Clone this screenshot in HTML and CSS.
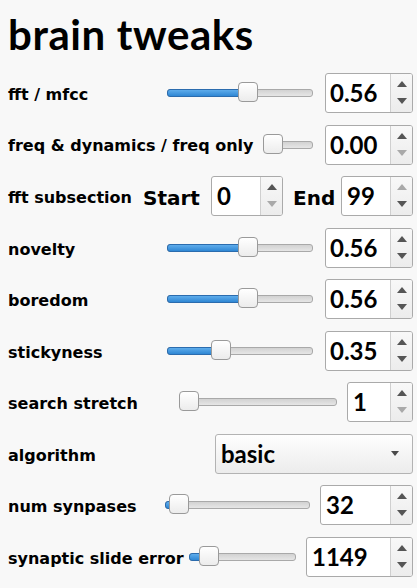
FILE: index.html
```html
<!DOCTYPE html>
<html>
<head>
<meta charset="utf-8">
<link rel="stylesheet" href="styles.css">
</head>
<body>
<main class="panel">
  <h1 class="title">brain tweaks</h1>

  <div class="row">
    <span class="label w159">fft / mfcc</span>
    <div class="slider"><div class="track"><div class="fill" style="width:81px"></div></div><div class="handle" style="left:71px"></div></div>
    <div class="spin sp88 ml12"><span class="val">0.56</span><span class="btns"><i class="up"></i><i class="down"></i></span></div>
  </div>

  <div class="row">
    <span class="label w255">freq &amp; dynamics / freq only</span>
    <div class="slider"><div class="track"></div><div class="handle" style="left:0px"></div></div>
    <div class="spin sp88 ml12"><span class="val">0.00</span><span class="btns"><i class="up"></i><i class="down off"></i></span></div>
  </div>

  <div class="row">
    <span class="label w135">fft subsection</span>
    <span class="word w68">Start</span>
    <div class="spin sp72"><span class="val pl5">0</span><span class="btns"><i class="up"></i><i class="down off"></i></span></div>
    <span class="word w48 ml10">End</span>
    <div class="spin sp72"><span class="val pl5">99</span><span class="btns"><i class="up off"></i><i class="down"></i></span></div>
  </div>

  <div class="row">
    <span class="label w159">novelty</span>
    <div class="slider"><div class="track"><div class="fill" style="width:81px"></div></div><div class="handle" style="left:71px"></div></div>
    <div class="spin sp88 ml12"><span class="val">0.56</span><span class="btns"><i class="up"></i><i class="down"></i></span></div>
  </div>

  <div class="row">
    <span class="label w159">boredom</span>
    <div class="slider"><div class="track"><div class="fill" style="width:81px"></div></div><div class="handle" style="left:71px"></div></div>
    <div class="spin sp88 ml12"><span class="val">0.56</span><span class="btns"><i class="up"></i><i class="down"></i></span></div>
  </div>

  <div class="row">
    <span class="label w159">stickyness</span>
    <div class="slider"><div class="track"><div class="fill" style="width:54px"></div></div><div class="handle" style="left:44px"></div></div>
    <div class="spin sp88 ml12"><span class="val">0.35</span><span class="btns"><i class="up"></i><i class="down"></i></span></div>
  </div>

  <div class="row">
    <span class="label w171">search stretch</span>
    <div class="slider"><div class="track"></div><div class="handle" style="left:0px"></div></div>
    <div class="spin sp66 ml10"><span class="val pl5">1</span><span class="btns"><i class="up"></i><i class="down off"></i></span></div>
  </div>

  <div class="row">
    <span class="label w207">algorithm</span>
    <div class="combo"><span class="combo-text">basic</span><i class="combo-arrow"></i></div>
  </div>

  <div class="row">
    <span class="label w157">num synpases</span>
    <div class="slider"><div class="track"><div class="fill" style="width:14px"></div></div><div class="handle" style="left:4px"></div></div>
    <div class="spin sp93 ml10"><span class="val pl5">32</span><span class="btns"><i class="up"></i><i class="down"></i></span></div>
  </div>

  <div class="row">
    <span class="label w181">synaptic slide error</span>
    <div class="slider"><div class="track"><div class="fill" style="width:20px"></div></div><div class="handle" style="left:10px"></div></div>
    <div class="spin sp107 ml10"><span class="val pl5">1149</span><span class="btns"><i class="up"></i><i class="down"></i></span></div>
  </div>
</main>
</body>
</html>
```

FILE: styles.css
```css
body {
  margin: 0;
  background: #f8f8f8;
  color: #000;
}

.panel {
  display: flex;
  flex-direction: column;
  gap: 11.56px;
  width: 405px;
  padding: 0 4px 0 8px;
}

.title {
  margin: 0;
  height: 61.44px;
  box-sizing: border-box;
  padding-top: 8.5px;
  font: 700 42px/1.2 Lato, sans-serif;
  letter-spacing: 0.6px;
}

.row {
  display: flex;
  align-items: center;
  height: 40px;
}

.label {
  flex: none;
  font: 700 16px/1.2 "DejaVu Sans", sans-serif;
  white-space: nowrap;
  padding-top: 3px;
}

.word {
  flex: none;
  font: 700 20px/1.2 "DejaVu Sans", sans-serif;
  white-space: nowrap;
  padding-top: 3px;
}

.w135 { width: 135px; }
.w157 { width: 157px; }
.w159 { width: 159px; }
.w171 { width: 171px; }
.w181 { width: 181px; }
.w207 { width: 207px; }
.w255 { width: 255px; }
.w68 { width: 68px; }
.w48 { width: 48px; }
.ml10 { margin-left: 10px; }
.ml12 { margin-left: 12px; }

.slider {
  flex: 1;
  min-width: 0;
  position: relative;
  height: 20px;
  margin-top: -2px;
}

.track {
  position: absolute;
  left: 0;
  right: 0;
  top: 7px;
  height: 8px;
  box-sizing: border-box;
  border: 1px solid #a9a9a9;
  border-radius: 3px;
  background: linear-gradient(#d2d2d2, #e6e6e6);
}

.fill {
  position: absolute;
  left: -1px;
  top: -1px;
  bottom: -1px;
  box-sizing: border-box;
  border: 1px solid #2b6cae;
  border-radius: 3px 0 0 3px;
  background: linear-gradient(#5eaceb, #2f87d4);
}

.handle {
  position: absolute;
  top: 0;
  width: 20px;
  height: 20px;
  box-sizing: border-box;
  border: 1px solid #9a9a9a;
  border-radius: 4px;
  background: linear-gradient(#ffffff, #ececec);
}

.spin {
  flex: none;
  display: flex;
  height: 40px;
  box-sizing: border-box;
  border: 1px solid #aaaaaa;
  border-radius: 3px;
  background: #fff;
}

.sp66 { width: 66px; }
.sp72 { width: 72px; }
.sp88 { width: 88px; }
.sp93 { width: 93px; }
.sp107 { width: 107px; }

.val {
  flex: 1;
  padding-left: 4px;
  font: 700 24px/38px Lato, sans-serif;
  white-space: nowrap;
}

.pl5 { padding-left: 5px; }

.btns {
  flex: none;
  width: 21px;
  display: flex;
  flex-direction: column;
  align-items: center;
  border-left: 1px solid #cfcfcf;
  border-radius: 0 2px 2px 0;
  background: linear-gradient(#f8f8f8, #ececec);
}

.up, .down {
  display: block;
  width: 0;
  height: 0;
  border-left: 5.5px solid transparent;
  border-right: 5.5px solid transparent;
}

.up {
  margin-top: 7px;
  border-bottom: 6px solid #555;
}

.down {
  margin-top: 11px;
  border-top: 6px solid #555;
}

.up.off { border-bottom-color: #a9a9a9; }
.down.off { border-top-color: #a9a9a9; }

.combo {
  flex: none;
  width: 198px;
  display: flex;
  align-items: center;
  height: 40px;
  box-sizing: border-box;
  border: 1px solid #b3b3b3;
  border-radius: 3px;
  background: linear-gradient(#fefefe, #ececec);
  padding: 0 13px 0 5px;
}

.combo-text {
  flex: 1;
  font: 700 24px/38px Lato, sans-serif;
}

.combo-arrow {
  display: block;
  width: 0;
  height: 0;
  border-left: 4.5px solid transparent;
  border-right: 4.5px solid transparent;
  border-top: 5px solid #4a4a4a;
}
```
